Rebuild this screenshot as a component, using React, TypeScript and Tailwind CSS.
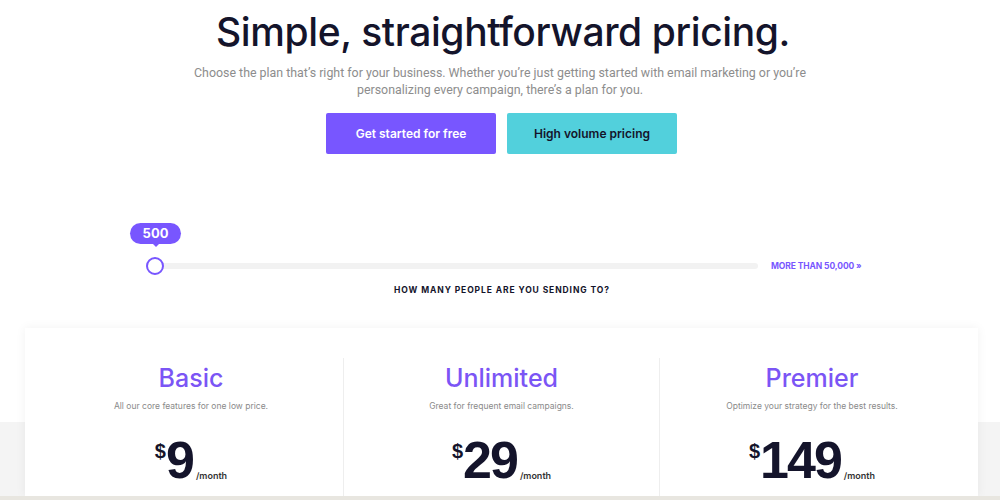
const plans = [
  { name: "Basic", blurb: "All our core features for one low price.", price: "9" },
  { name: "Unlimited", blurb: "Great for frequent email campaigns.", price: "29" },
  { name: "Premier", blurb: "Optimize your strategy for the best results.", price: "149" },
]

const PlanColumn = ({ name, blurb, price, middle }: { name: string; blurb: string; price: string; middle?: boolean }) => {
  return (
    <div className={"flex flex-col items-center pt-[4px] " + (middle ? "border-x border-[#eeeeee]" : "")}>
      <h3 className="text-[25px] leading-[32px] font-medium text-[#7b55f5]">{name}</h3>
      <p className="mt-[6px] text-[8.5px] text-[#8a8a8a]">{blurb}</p>
      <div className="mt-[25px] flex items-start font-['Liberation_Sans',Arial,sans-serif] text-[#14142b]">
        <span className="mt-[4px] text-[20px] font-bold leading-none">$</span>
        <span className="text-[52px] font-bold leading-[46px] tracking-[-2px]">{price}</span>
        <span className="ml-[3px] self-end mb-[1px] text-[9px] font-semibold font-['Inter',sans-serif] text-[#333]">/month</span>
      </div>
    </div>
  )
}

export default function App() {
  return (
    <div className="w-[1000px] h-[500px] overflow-hidden bg-white font-['Inter',sans-serif] flex flex-col">
      <div className="flex flex-col items-center pt-[7px]">
        <h1 className="pl-[6px] text-[39px] leading-[49px] font-medium tracking-[-0.4px] text-[#14142b]">
          Simple, straightforward pricing.
        </h1>
        <p className="mt-[8px] text-center font-['Roboto',sans-serif] text-[12.4px] leading-[17px] text-[#8d8d8d]">
          Choose the plan that’s right for your business. Whether you’re just getting started with email marketing or you’re
          <br />
          personalizing every campaign, there’s a plan for you.
        </p>
        <div className="mt-[15px] ml-[3px] flex gap-[11px]">
          <button className="w-[170px] h-[41px] rounded-[2px] bg-[#7856ff] text-white text-[12px] font-semibold">
            Get started for free
          </button>
          <button className="w-[170px] h-[41px] rounded-[2px] bg-[#52d0dc] text-[#14142b] text-[12px] font-semibold">
            High volume pricing
          </button>
        </div>
      </div>

      <div className="mt-[69px] flex flex-col">
        <div className="ml-[130px] relative w-[51px] h-[21px] rounded-full bg-[#7856ff] flex items-center justify-center text-white text-[13px] font-bold">
          500
          <div className="absolute top-[20px] left-[22px] w-0 h-0 border-x-[4px] border-x-transparent border-t-[4px] border-t-[#7856ff]" />
        </div>
        <div className="mt-[16px] flex items-center">
          <div className="ml-[146px] w-[612px] relative flex items-center">
            <div className="w-full h-[6px] rounded-full bg-[#f2f2f2]" />
            <div className="absolute left-0 w-[18px] h-[18px] rounded-full bg-white border-2 border-[#7856ff]" />
          </div>
          <span className="ml-[13px] text-[8.5px] font-bold text-[#7856ff] tracking-[-0.1px]">MORE THAN 50,000 »</span>
        </div>
        <p className="mt-[11px] text-center text-[8.5px] font-bold tracking-[0.9px] text-[#14142b] pl-[4px]">
          HOW MANY PEOPLE ARE YOU SENDING TO?
        </p>
      </div>

      <div className="mt-[31px] flex-1 flex flex-col bg-[linear-gradient(to_bottom,white_94px,#f4f4f4_94px)]">
        <div className="flex-1 mx-[25px] w-[953px] bg-white shadow-[0_0_10px_rgba(0,0,0,0.06)] pt-[30px] px-[14px] grid grid-cols-[304px_317px_1fr]">
          {plans.map((p, i) => (
            <PlanColumn key={p.name} name={p.name} blurb={p.blurb} price={p.price} middle={i === 1} />
          ))}
        </div>
        <div className="h-[4px] bg-[#e8e6e0]" />
      </div>
    </div>
  )
}
